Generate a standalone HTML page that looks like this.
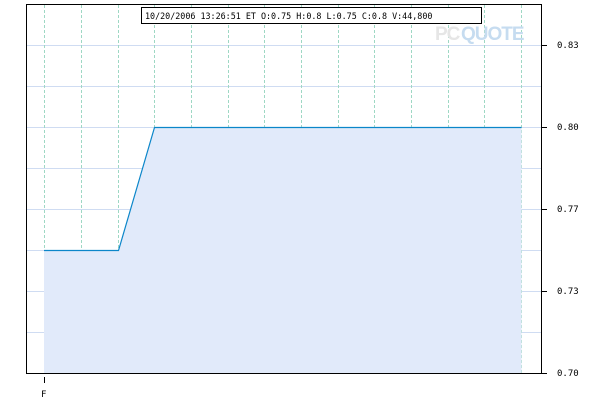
<!DOCTYPE html>
<html><head><style>
html,body{margin:0;padding:0;background:#fff;width:600px;height:400px;overflow:hidden}
svg text{font-family:"DejaVu Sans Mono","Liberation Mono",monospace;font-size:9px;fill:#000}
</style></head><body>
<svg width="600" height="400" xmlns="http://www.w3.org/2000/svg" shape-rendering="crispEdges">
<g stroke="#cfdcf2" stroke-width="1">
<line x1="26" y1="45.5" x2="541" y2="45.5"/>
<line x1="26" y1="86.5" x2="541" y2="86.5"/>
<line x1="26" y1="127.5" x2="541" y2="127.5"/>
<line x1="26" y1="168.5" x2="541" y2="168.5"/>
<line x1="26" y1="209.5" x2="541" y2="209.5"/>
<line x1="26" y1="250.5" x2="541" y2="250.5"/>
<line x1="26" y1="291.5" x2="541" y2="291.5"/>
<line x1="26" y1="332.5" x2="541" y2="332.5"/>
</g>
<g stroke="#9ed8c4" stroke-width="1" stroke-dasharray="3,2">
<line x1="44.5" y1="5" x2="44.5" y2="373"/>
<line x1="81.5" y1="5" x2="81.5" y2="373"/>
<line x1="118.5" y1="5" x2="118.5" y2="373"/>
<line x1="154.5" y1="5" x2="154.5" y2="373"/>
<line x1="191.5" y1="5" x2="191.5" y2="373"/>
<line x1="228.5" y1="5" x2="228.5" y2="373"/>
<line x1="264.5" y1="5" x2="264.5" y2="373"/>
<line x1="301.5" y1="5" x2="301.5" y2="373"/>
<line x1="338.5" y1="5" x2="338.5" y2="373"/>
<line x1="374.5" y1="5" x2="374.5" y2="373"/>
<line x1="411.5" y1="5" x2="411.5" y2="373"/>
<line x1="448.5" y1="5" x2="448.5" y2="373"/>
<line x1="484.5" y1="5" x2="484.5" y2="373"/>
<line x1="521.5" y1="5" x2="521.5" y2="373"/>
</g>
<polygon points="44,250.5 118.5,250.5 154.5,127.5 521.5,127.5 521.5,373 44,373" fill="#e1eafa" shape-rendering="auto"/>
<polyline points="44,250.5 118.5,250.5 154.5,127.5 521.5,127.5" fill="none" stroke="#0b86c9" stroke-width="1.2" shape-rendering="auto"/>
<text x="435" y="40" style="fill:#e6e6e6;font-family:'Liberation Sans',sans-serif;font-size:19px;font-weight:bold;letter-spacing:-1px">PC</text>
<text x="461" y="40" style="fill:#c6dcf0;font-family:'Liberation Sans',sans-serif;font-size:19px;font-weight:bold;letter-spacing:-1px">QUOTE</text>
<rect x="141.5" y="7.5" width="340" height="16" fill="#fff" stroke="#000"/>
<text x="145" y="19" style="font-size:8.4px">10/20/2006 13:26:51 ET  O:0.75 H:0.8 L:0.75 C:0.8 V:44,800</text>
<g stroke="#000" stroke-width="1">
<line x1="26.5" y1="4" x2="26.5" y2="374"/>
<line x1="26" y1="4.5" x2="542" y2="4.5"/>
<line x1="541.5" y1="4" x2="541.5" y2="374"/>
<line x1="26" y1="373.5" x2="547" y2="373.5"/>
<line x1="541" y1="45.5" x2="547" y2="45.5"/>
<line x1="541" y1="127.5" x2="547" y2="127.5"/>
<line x1="541" y1="209.5" x2="547" y2="209.5"/>
<line x1="541" y1="291.5" x2="547" y2="291.5"/>
<line x1="44.5" y1="377" x2="44.5" y2="383"/>
</g>
<text x="557" y="48">0.83</text>
<text x="557" y="130">0.80</text>
<text x="557" y="212">0.77</text>
<text x="557" y="294">0.73</text>
<text x="557" y="376">0.70</text>
<text x="41" y="397">F</text>
</svg>
</body></html>
